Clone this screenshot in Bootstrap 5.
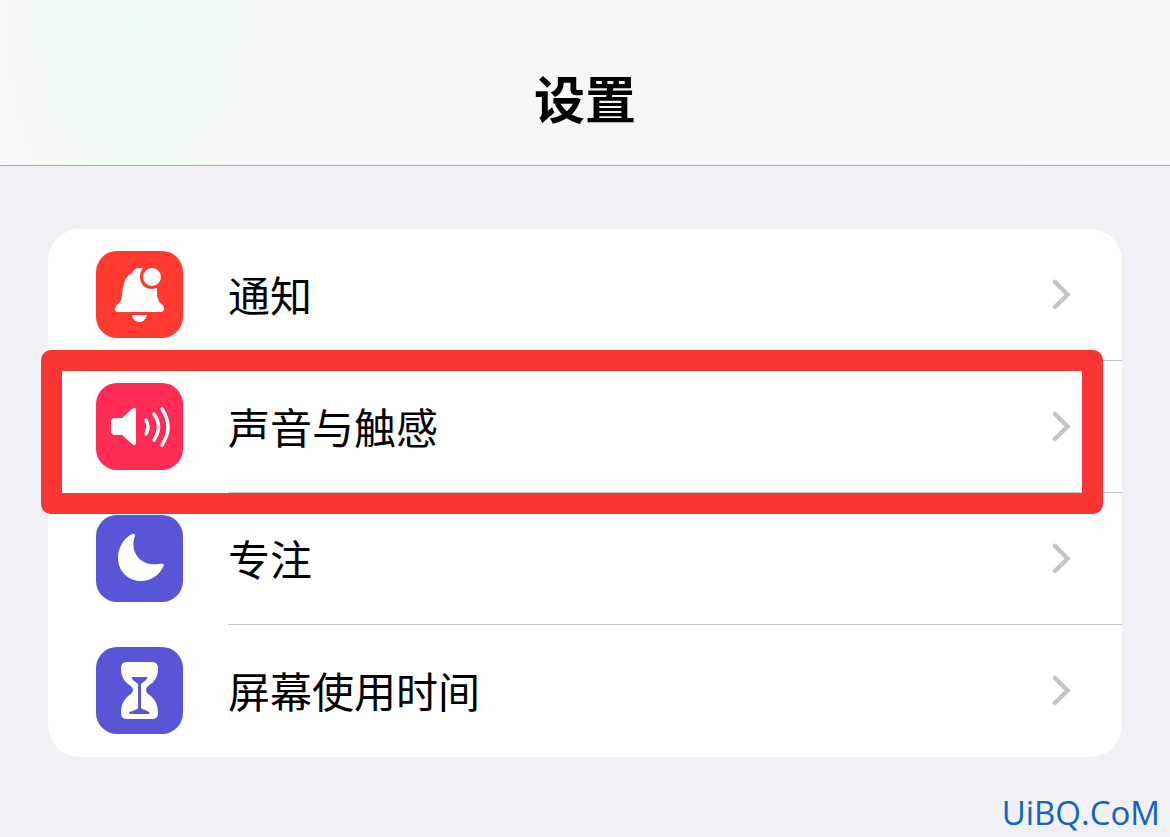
<!DOCTYPE html>
<html lang="zh-CN">
<head>
<meta charset="utf-8">
<meta name="viewport" content="width=device-width, initial-scale=1">
<title>设置</title>
<link href="https://cdn.jsdelivr.net/npm/bootstrap@5.3.0/dist/css/bootstrap.min.css" rel="stylesheet">
<style>
  body { background: #f0f0f5; color: #000; font-family: "Noto Sans CJK SC", sans-serif; }
  .top-bar {
    height: 166px;
    padding-top: 28px;
    border-bottom: 1px solid #a9a9ad;
    background: radial-gradient(ellipse 160px 260px at 140px 20px, #eefbf1 0%, #effaf2 30%, rgba(247,247,248,0) 100%),
      linear-gradient(90deg, #f9fbfa, #f6f6f7 30%, #f7f7f8 85%, #f9f9f9);
  }
  .top-bar h1 { font-size: 51px; line-height: 60px; font-weight: 700; }
  .settings { margin: 63px 48px 0; border-radius: 32px; background: #fff; }
  .setting { height: 132px; padding-left: 48px; gap: 45px; color: #000; }
  .setting:hover { color: #000; }
  .app-icon { width: 87px; height: 87px; margin-bottom: 2px; border-radius: 21px; }
  .setting-body { border-bottom: 1px solid #c6c6c8; padding: 0 50px 2px 0; }
  .setting-item:last-child .setting-body { border-bottom-color: transparent; }
  .setting-label { font-size: 42px; line-height: 60px; }
  .highlight { inset: -11px 19px -21px -7px; border: 21px solid #f83535; border-radius: 10px; z-index: 2; }
  .site-mark { padding: 38px 10px 0 0; font-family: "Open Sans", sans-serif; font-size: 33px; line-height: 36px; color: #1263c4; }
  .bg-notice { background: #ff3b30; }
  .bg-sound { background: #ff2d55; }
  .bg-focus { background: #5856d6; }
</style>
</head>
<body>
<header class="top-bar d-flex align-items-center justify-content-center">
  <h1 class="m-0">设置</h1>
</header>
<main>
  <ul class="settings list-unstyled mb-0">
    <li class="setting-item">
      <a class="setting d-flex align-items-center text-decoration-none" href="#notifications">
        <svg class="app-icon bg-notice flex-shrink-0" viewBox="0 0 87 87" aria-hidden="true">
          <path fill="#fff" d="M22 61Q18 61 19 57Q20 54 23 52Q26 49 26 45Q26 41 27 36Q29 25 36 22Q38 17 44 17H47Q44 20 44 26C44 34 50 38 55 38Q58 38 61 37L61 45Q62 49 64 52Q68 54 68 58Q68 61 64 61Z"/>
          <circle cx="56" cy="26" r="9" fill="#fff"/>
          <path fill="#fff" d="M36 64H51Q49 71 43.500 71Q37 71 36 64Z"/>
        </svg>
        <span class="setting-body d-flex flex-grow-1 align-items-center justify-content-between align-self-stretch">
          <span class="setting-label">通知</span>
          <svg width="22" height="34" viewBox="0 0 22 34" fill="none" stroke="#c4c4c6" stroke-width="4.500" stroke-linecap="round" stroke-linejoin="miter" aria-hidden="true"><path d="M5 5L17.500 17.500L5 30"/></svg>
        </span>
      </a>
    </li>
    <li class="setting-item position-relative">
      <a class="setting d-flex align-items-center text-decoration-none" href="#sounds">
        <svg class="app-icon bg-sound flex-shrink-0" viewBox="0 0 87 87" aria-hidden="true">
          <path fill="#fff" d="M19 35H26L36 26Q40 23 40 28V59Q40 64 36 61L26 52H19Q15 52 15 48V39Q15 35 19 35Z"/>
          <path fill="none" stroke="#fff" stroke-width="3.500" stroke-linecap="round" d="M50 37Q54 44 50 51M58 31Q67 44 58 57M66 26Q78 44 66 62"/>
        </svg>
        <span class="setting-body d-flex flex-grow-1 align-items-center justify-content-between align-self-stretch">
          <span class="setting-label">声音与触感</span>
          <svg width="22" height="34" viewBox="0 0 22 34" fill="none" stroke="#c4c4c6" stroke-width="4.500" stroke-linecap="round" stroke-linejoin="miter" aria-hidden="true"><path d="M5 5L17.500 17.500L5 30"/></svg>
        </span>
      </a>
      <div class="highlight position-absolute pe-none"></div>
    </li>
    <li class="setting-item">
      <a class="setting d-flex align-items-center text-decoration-none" href="#focus">
        <svg class="app-icon bg-focus flex-shrink-0" viewBox="0 0 87 87" aria-hidden="true">
          <path fill="#fff" d="M36 19Q39 18 39 21C33 36 44 52 63 49Q67 48 68 50C64 60 55 66 45 66C32 66 22 56 22 43C22 32 28 23 36 19Z"/>
        </svg>
        <span class="setting-body d-flex flex-grow-1 align-items-center justify-content-between align-self-stretch">
          <span class="setting-label">专注</span>
          <svg width="22" height="34" viewBox="0 0 22 34" fill="none" stroke="#c4c4c6" stroke-width="4.500" stroke-linecap="round" stroke-linejoin="miter" aria-hidden="true"><path d="M5 5L17.500 17.500L5 30"/></svg>
        </span>
      </a>
    </li>
    <li class="setting-item">
      <a class="setting d-flex align-items-center text-decoration-none" href="#screen-time">
        <svg class="app-icon bg-focus flex-shrink-0" viewBox="0 0 87 87" aria-hidden="true">
          <path fill="#fff" d="M31 15H56Q62 15 62 21C62 31 58 35 52 39Q48 43 52 47C58 51 62 56 62 66Q62 72 56 72H31Q25 72 25 66C25 56 29 51 35 47Q39 43 35 39C29 35 25 31 25 21Q25 15 31 15Z"/>
          <path fill="#5856d6" d="M36 30H51Q52 31 50 33L45 37V61Q46 62 49 63L53 65Q54 66 53 67H34Q32 66 34 65L39 63Q42 62 42 61V37L37 33Q35 31 36 30Z"/>
        </svg>
        <span class="setting-body d-flex flex-grow-1 align-items-center justify-content-between align-self-stretch">
          <span class="setting-label">屏幕使用时间</span>
          <svg width="22" height="34" viewBox="0 0 22 34" fill="none" stroke="#c4c4c6" stroke-width="4.500" stroke-linecap="round" stroke-linejoin="miter" aria-hidden="true"><path d="M5 5L17.500 17.500L5 30"/></svg>
        </span>
      </a>
    </li>
  </ul>
</main>
<footer class="site-mark text-end">UiBQ.CoM</footer>
<script src="https://cdn.jsdelivr.net/npm/bootstrap@5.3.0/dist/js/bootstrap.bundle.min.js"></script>
</body>
</html>
